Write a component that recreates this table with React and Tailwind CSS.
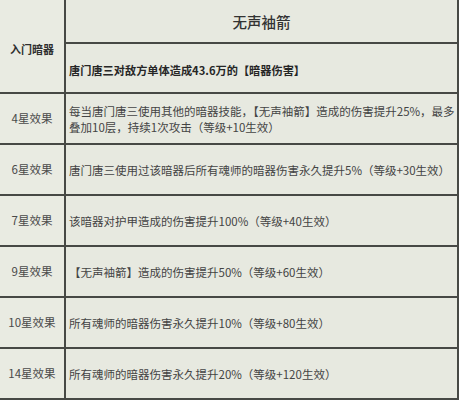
import React from "react";

const rows = [
  { label: "4星效果", text: "每当唐门唐三使用其他的暗器技能，【无声袖箭】造成的伤害提升25%，最多叠加10层，持续1次攻击（等级+10生效）" },
  { label: "6星效果", text: "唐门唐三使用过该暗器后所有魂师的暗器伤害永久提升5%（等级+30生效）" },
  { label: "7星效果", text: "该暗器对护甲造成的伤害提升100%（等级+40生效）" },
  { label: "9星效果", text: "【无声袖箭】造成的伤害提升50%（等级+60生效）" },
  { label: "10星效果", text: "所有魂师的暗器伤害永久提升10%（等级+80生效）" },
  { label: "14星效果", text: "所有魂师的暗器伤害永久提升20%（等级+120生效）" },
];

export default function App() {
  return (
    <div
      className="w-[459px] h-[400px] overflow-hidden bg-[#e7e9e0] text-[#3a3a3a]"
      style={{ fontFamily: '"Noto Sans CJK SC", "Noto Sans", sans-serif' }}
    >
      <div className="grid grid-cols-[66px_1fr] border-r-2 border-b-2 border-[#474945] h-[400px] grid-rows-[44px_50px_51px_51px_51px_51px_51px_1fr]">
        <div className="row-span-2 border-r-2 border-b-2 border-[#474945] flex items-center justify-center text-[11px] font-bold text-[#2f2f2f] pt-[6px] bg-[#e9ebe2]">
          入门暗器
        </div>
        <div className="border-b-2 border-[#474945] flex items-center justify-center text-[14.5px] font-medium text-[#333] pt-[2px]">
          无声袖箭
        </div>
        <div className="border-b-2 border-[#474945] flex items-center pl-[3px] text-[11.2px] font-bold text-[#262626] pt-[4px]">
          唐门唐三对敌方单体造成43.6万的【暗器伤害】
        </div>
        {rows.map((r, i) => {
          const last = i === rows.length - 1;
          return (
            <React.Fragment key={r.label}>
              <div
                className={`border-r-2 border-[#474945] flex items-center justify-center text-[11.5px] text-[#4a4a4a] bg-[#e9ebe2] ${last ? "" : "border-b-2"}`}
              >
                {r.label}
              </div>
              <div
                className={`border-[#474945] flex items-center pl-[3px] pr-[2px] text-[11.5px] leading-[16px] text-[#444] ${last ? "" : "border-b-2"}`}
              >
                <span>{r.text}</span>
              </div>
            </React.Fragment>
          );
        })}
      </div>
    </div>
  );
}
